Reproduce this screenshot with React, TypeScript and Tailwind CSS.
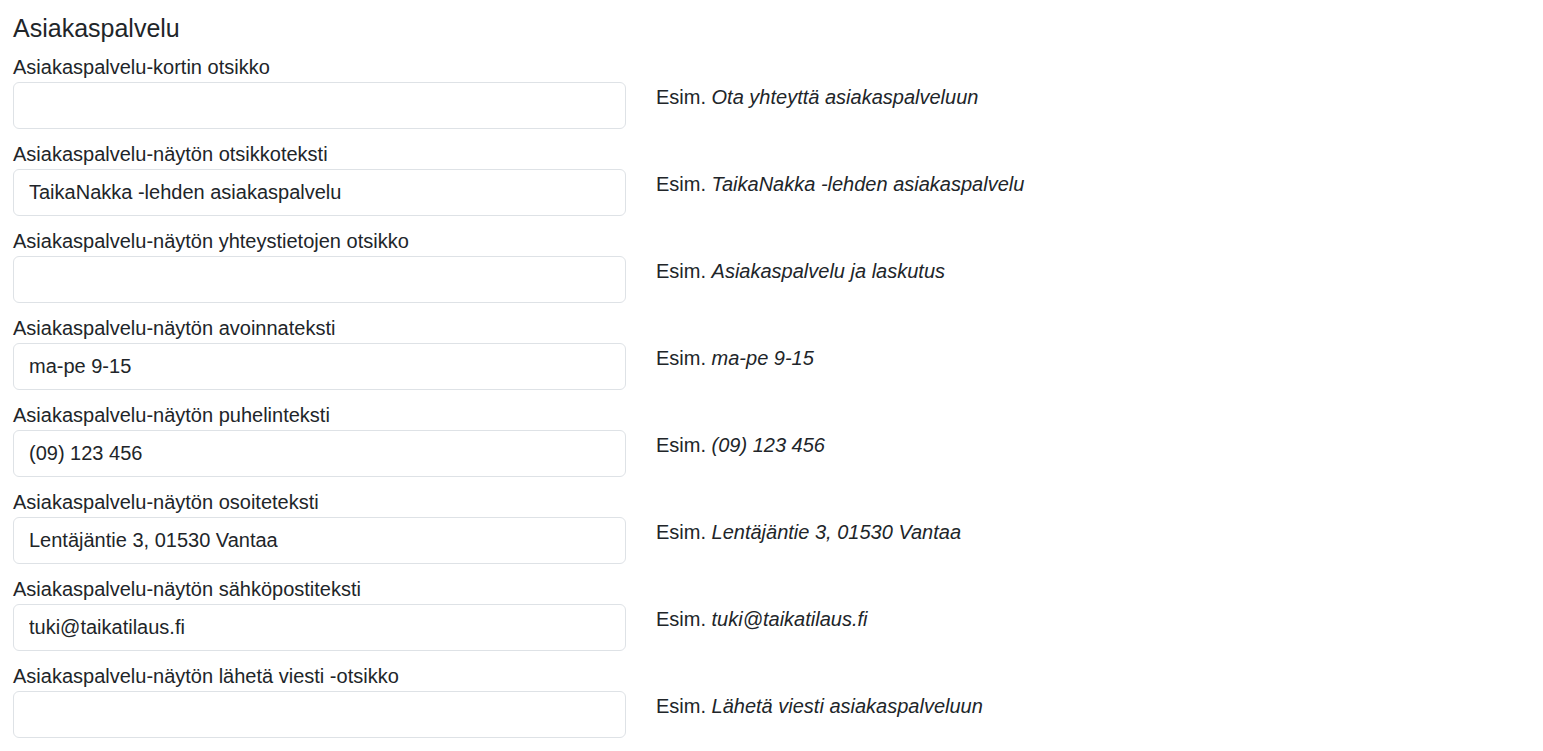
const fields = [
  { label: "Asiakaspalvelu-kortin otsikko", value: "", hint: "Ota yhteyttä asiakaspalveluun" },
  { label: "Asiakaspalvelu-näytön otsikkoteksti", value: "TaikaNakka -lehden asiakaspalvelu", hint: "TaikaNakka -lehden asiakaspalvelu" },
  { label: "Asiakaspalvelu-näytön yhteystietojen otsikko", value: "", hint: "Asiakaspalvelu ja laskutus" },
  { label: "Asiakaspalvelu-näytön avoinnateksti", value: "ma-pe 9-15", hint: "ma-pe 9-15" },
  { label: "Asiakaspalvelu-näytön puhelinteksti", value: "(09) 123 456", hint: "(09) 123 456" },
  { label: "Asiakaspalvelu-näytön osoiteteksti", value: "Lentäjäntie 3, 01530 Vantaa", hint: "Lentäjäntie 3, 01530 Vantaa" },
  { label: "Asiakaspalvelu-näytön sähköpostiteksti", value: "tuki@taikatilaus.fi", hint: "tuki@taikatilaus.fi" },
  { label: "Asiakaspalvelu-näytön lähetä viesti -otsikko", value: "", hint: "Lähetä viesti asiakaspalveluun" },
];

export default function App() {
  return (
    <div className="min-h-screen bg-white px-[13px] pt-[13px] text-[#212529] font-['Liberation_Sans',Arial,sans-serif]">
      <h2 className="text-[25px] leading-[30px] mb-[9px]">Asiakaspalvelu</h2>
      {fields.map((f, idx) => (
        <div key={idx} className="mb-[10px]">
          <label className="block text-[20px] leading-[30px]">{f.label}</label>
          <div className="flex items-start">
            <input
              type="text"
              defaultValue={f.value}
              className="w-[613px] h-[47px] px-[15px] text-[20px] border border-[#dee2e6] rounded-[6px] outline-none text-[#212529]"
            />
            <span className="ml-[30px] text-[20px] leading-[30px]">
              Esim. <i>{f.hint}</i>
            </span>
          </div>
        </div>
      ))}
    </div>
  );
}
